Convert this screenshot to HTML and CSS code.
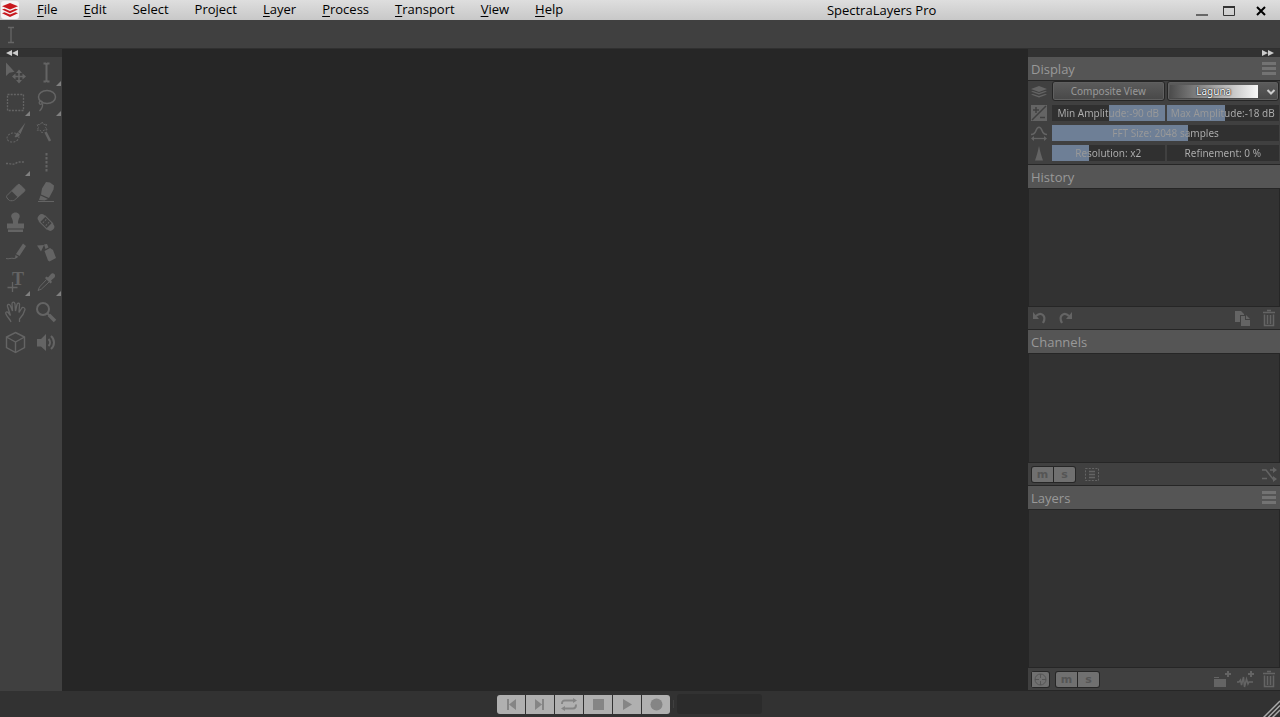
FILE: index.html
```html
<!DOCTYPE html>
<html lang="en">
<head>
    <meta charset="UTF-8">
    <meta name="viewport" content="width=device-width, initial-scale=1.0">
    <title>SpectraLayers Pro</title>
    <link rel="stylesheet" href="styles.css">
</head>
<body>
    <header class="titlebar">
        <svg class="app-logo" viewBox="0 0 20 20">
            <rect x="1" y="1" width="18" height="18" rx="3" fill="#f4f4f4"/>
            <path d="M10 3 18 6.200 10 9.500 2 6.200Z" fill="#c8191e"/>
            <path d="M2 9.500 4.500 8.700 10 11 15.500 8.700 18 9.500 10 13.200ZM2 13.200 4.500 12.200 10 14.500 15.500 12.200 18 13.200 10 17Z" fill="#c8191e"/>
        </svg>
        <nav class="menu">
            <button><u>F</u>ile</button>
            <button><u>E</u>dit</button>
            <button>Select</button>
            <button>Project</button>
            <button><u>L</u>ayer</button>
            <button><u>P</u>rocess</button>
            <button><u>T</u>ransport</button>
            <button><u>V</u>iew</button>
            <button><u>H</u>elp</button>
        </nav>
        <h1 class="app-title">SpectraLayers Pro</h1>
        <div class="window-buttons">
            <button aria-label="Minimize"><svg viewBox="0 0 30 20"><path d="M9 15h12" stroke="#444" stroke-width="1.500"/></svg></button>
            <button aria-label="Maximize"><svg viewBox="0 0 30 20"><path d="M6.500 6.500h11v9h-11z" fill="none" stroke="#333"/><path d="M6 7h12" stroke="#333" stroke-width="2"/></svg></button>
            <button aria-label="Close"><svg viewBox="0 0 30 20"><path d="m10 7 8 8m0-8-8 8" stroke="#000" stroke-width="2"/></svg></button>
        </div>
    </header>

    <div class="toolbar">
        <svg class="toolbar-icon" viewBox="0 0 22 28"><path d="M8 7.500h2.500l.5.5.5-.5H14M8 22.500h2.500l.5-.5.5.5H14M11 8v14" fill="none" stroke="#666" stroke-width="1.300"/></svg>
    </div>

    <main class="workspace">
        <aside class="toolbox">
            <div class="strip"><button aria-label="Collapse tools"><svg viewBox="0 0 12 6"><path d="M6 0v6L0 3zM12 0v6L6 3z"/></svg></button></div>
            <div class="tools">
                <button aria-label="Move"><svg viewBox="0 0 30 30">
                    <path class="fill" d="M6 5.500V19l3.500-3.300 5-1zM19 12.500l3 3.500h-6zM19 26.500l3-3.500h-6zM12 19.500l3.500-3v6zM26 19.500l-3.500-3v6z"/>
                    <path d="M19 15v9M14 19.500h10" stroke-width="1.500"/></svg></button>
                <button aria-label="Time selection" class="more"><svg viewBox="0 0 30 30">
                    <path d="M12.500 6.500h2l1 1 1-1h2M12.500 24.500h2l1-1 1 1h2M15.500 7v17" stroke-width="2"/></svg></button>
                <button aria-label="Rectangular selection" class="more"><svg viewBox="0 0 30 30">
                    <path d="M7.500 7.500h16v16h-16z" stroke-dasharray="2 1.200" stroke-width="1.300"/></svg></button>
                <button aria-label="Lasso selection" class="more"><svg viewBox="0 0 30 30">
                    <ellipse cx="16" cy="10" rx="8.500" ry="6.500" stroke-width="1.500"/>
                    <path d="M9 14c-2 2 0 4 1.500 3s1-3-1-3M11.500 17c.5 3-1 5-3 7" stroke-width="1.300"/></svg></button>
                <button aria-label="Brush selection"><svg viewBox="0 0 30 30">
                    <ellipse cx="13" cy="20.500" rx="6" ry="4.500" stroke-dasharray="2 1.300" transform="rotate(-12 13 20.500)"/>
                    <path class="fill" d="M25.500 5.500 20.500 17l-2.500-2zM17.500 15.500l2.500 2c-1.500 2.500-3 3-5.500 2.500 1-1 1-3.500 3-4.500z"/></svg></button>
                <button aria-label="Magic wand"><svg viewBox="0 0 30 30">
                    <path d="m11 5 1.700 2.500 3-.3-1.200 3 1.700 2.600-3.200.2L11 16l-2-3-3 .2L7.500 10.500 6 7.500l3.200.2z" stroke-dasharray="2 1"/>
                    <path d="m14.500 15 4.500 9" stroke-width="2.500"/></svg></button>
                <button aria-label="Frequency selection" class="more"><svg viewBox="0 0 30 30">
                    <path d="M6 16.500h3c4 1.500 6 .5 9-1.500h7" stroke-width="1.500" stroke-dasharray="2 1.300"/></svg></button>
                <button aria-label="Transient selection"><svg viewBox="0 0 30 30">
                    <path d="M15.500 6v19" stroke-width="2" stroke-dasharray="2.500 1.500"/></svg></button>
                <button aria-label="Eraser"><svg viewBox="0 0 30 30">
                    <path d="M7 18.500 18 7.500q1-.5 2 .2l4.500 4.500q.8 1 0 2L14.500 23q-1 .7-2 .7h-2q-1 0-1.700-.7L7 21q-1-1.500 0-2.500z"/>
                    <path class="fill" d="M11.500 14 18 7.500q1-.5 2 .2l4.500 4.500q.8 1 0 2L18 20.500z"/></svg></button>
                <button aria-label="Amplify"><svg viewBox="0 0 30 30">
                    <path class="fill" d="m15 5 4 .5 4 3-.5 4L18 21l-8-3.500 1-6zM9.500 18.500 17 22l-3.500 1.500-5.500-.5z"/>
                    <path d="M7 24.500h16"/></svg></button>
                <button aria-label="Clone stamp"><svg viewBox="0 0 30 30">
                    <path class="fill" d="M15.500 5.500c3 0 5 2.500 4 5-1 2-1.500 3-1.500 6h6v5H7v-5h6c0-3-.5-4-1.500-6-1-2.500 1-5 4-5zM8 22.500h15V25H8z"/></svg></button>
                <button aria-label="Heal"><svg viewBox="0 0 30 30"><g transform="rotate(45 15 15.500)">
                    <path class="fill" d="M9 11.500a4 4 0 0 0 0 8h1.500v-8zM21 11.500a4 4 0 0 1 0 8h-1.500v-8z"/><path d="M9 11.500h12M9 19.500h12"/>
                    <path d="M12.500 14h1m3 0h1m-5 3h1m3 0h1" stroke-width="1.800"/></g></svg></button>
                <button aria-label="Frequency repair"><svg viewBox="0 0 30 30">
                    <path d="M6 21.500c3 1 5-1 8 0l3-1"/><path class="fill" d="m23 6.500 3 2.500-6.500 10-3.500-2zM15.500 18l3 2-3.500 1.500z"/></svg></button>
                <button aria-label="Noise spray"><svg viewBox="0 0 30 30">
                    <path class="fill" d="M6 8.500 13 8l-3 6.500zM13 7.500l3-.500 1.500 3.500-3 1.500zM13.500 14l5.500-3 3 2 3 8-6.500 3.500-1.500-1z"/></svg></button>
                <button aria-label="Text" class="more"><svg viewBox="0 0 30 30">
                    <text class="fill icon-letter" x="12" y="18">T</text><path d="M12.500 15v10M7.500 20.500h10" stroke-width="1.300"/></svg></button>
                <button aria-label="Color picker" class="more"><svg viewBox="0 0 30 30">
                    <path d="m15.500 12.500-7 7.500-1.500 3.500 3.500-1.500 7.500-7"/><path class="fill" d="m14 11 1.500-1.500 1.500 1 3-3.500c2-2 5.500 1 3.500 3.500L20 13.500l1 1.500-1.500 1.500z"/></svg></button>
                <button aria-label="Hand"><svg viewBox="0 0 30 30">
                    <path d="M11 25c-1-3-4-5-5-8-1-2 1-3 2.500-1l2 2.500-3-9c-.5-2.500 2-3 3-.5l2 5-.5-7c0-2.500 2.500-2.500 3 0l.5 7 1.500-6.500c.5-2 3-1.500 2.500.5L19 15.500l2.500-4c1-2 3.500-1 3.500 1-1 4-2 6-5.500 9.500V25" stroke-width="1.300"/></svg></button>
                <button aria-label="Zoom"><svg viewBox="0 0 30 30">
                    <circle cx="12" cy="12" r="6" stroke-width="2"/><path d="m16.500 16.500 2 2" stroke-width="2"/><path d="m18 18 6 6" stroke-width="3.500"/></svg></button>
                <button aria-label="3D view"><svg viewBox="0 0 30 30">
                    <path d="m15.500 5.500 9 4.500v10.500l-9 5-9-5V10zM6.500 10l9 5 9-5M15.500 15v10.500" stroke-width="1.400"/></svg></button>
                <button aria-label="Playback"><svg viewBox="0 0 30 30">
                    <path class="fill" d="M6 12h4l5-5v17l-5-4.500H6z"/><path d="M17.500 12c2 2 2 5 0 7M20 9c4 3.500 4 9.500 0 13" stroke-width="2"/></svg></button>
            </div>
        </aside>

        <section class="canvas"></section>

        <aside class="panels">
            <div class="strip strip-right"><button aria-label="Collapse panels"><svg viewBox="0 0 12 6"><path d="M0 0v6l6-3zM6 0v6l6-3z"/></svg></button></div>

            <section class="panel">
                <div class="panel-header">
                    <h2>Display</h2>
                    <button class="panel-menu" aria-label="Display menu"></button>
                </div>
                <div class="display-settings">
                    <div class="setting view-row">
                        <svg class="setting-icon" viewBox="0 0 22 20"><path class="fill" d="m11 5 8 3-8 3L3 8zM3 10.500l2-.5 6 2 6-2 2 .5-8 3zM3 13.500l2-.5 6 2 6-2 2 .5-8 3z"/></svg>
                        <button class="view-button">Composite View</button>
                        <div class="color-map">
                            <select aria-label="Color map"><option>Laguna</option></select>
                            <svg viewBox="0 0 10 6"><path d="m1.500 1 3.500 3.500L8.500 1" fill="none" stroke="#ccc" stroke-width="2"/></svg>
                        </div>
                    </div>
                    <div class="setting">
                        <svg class="setting-icon" viewBox="0 0 22 16"><path class="fill" d="M3 0h16v16H3z"/><path d="M4 15 18 1M5 5h6M8 2v6M12 12.500h5" style="stroke: #404040" stroke-width="1.500"/></svg>
                        <div class="slider" style="--from: 50%; --to: 100%">
                            <input type="range" id="min-amp" min="-180" max="0" value="-90">
                            <label for="min-amp">Min Amplitude:-90 dB</label>
                        </div>
                        <div class="slider" style="--from: 0%; --to: 52%">
                            <input type="range" id="max-amp" min="-36" max="0" value="-18">
                            <label for="max-amp">Max Amplitude:-18 dB</label>
                        </div>
                    </div>
                    <div class="setting">
                        <svg class="setting-icon" viewBox="0 0 22 16"><path d="M3 9.500c3 0 4-1 5-4 1.500-4.500 4.500-4.500 6 0 1 3 2 4 5 4" stroke-width="1.500"/><path d="M5 13.500h12" stroke-width="1.300"/><path class="fill" d="m3 13.500 3-2.500v5zM19 13.500 16 11v5z"/></svg>
                        <div class="slider" style="--from: 0%; --to: 60%">
                            <input type="range" id="fft-size" min="6" max="14" value="11">
                            <label for="fft-size">FFT Size: 2048 samples</label>
                        </div>
                    </div>
                    <div class="setting">
                        <svg class="setting-icon" viewBox="0 0 22 16"><path class="fill" d="M11 1c1 5 2 9 4 14.500H7C9 10 10 6 11 1z"/></svg>
                        <div class="slider" style="--from: 0%; --to: 33%">
                            <input type="range" id="resolution" min="1" max="4" value="2">
                            <label for="resolution">Resolution: x2</label>
                        </div>
                        <div class="slider" style="--from: 0%; --to: 0%">
                            <input type="range" id="refinement" min="0" max="100" value="0">
                            <label for="refinement">Refinement: 0 %</label>
                        </div>
                    </div>
                </div>
            </section>

            <section class="panel panel-history">
                <div class="panel-header"><h2>History</h2></div>
                <div class="panel-list"></div>
                <div class="panel-footer">
                    <button class="icon-button" aria-label="Undo"><svg viewBox="0 0 22 22"><path class="fill" d="M5 5v7h6z"/><path d="M8 9c5-5 11 0 7 7" stroke-width="2.200"/></svg></button>
                    <button class="icon-button" aria-label="Redo"><svg viewBox="0 0 22 22"><path class="fill" d="M17 5v7h-6z"/><path d="M14 9C9 4 3 9 7 16" stroke-width="2.200"/></svg></button>
                    <span class="spacer"></span>
                    <button class="icon-button" aria-label="Copy"><svg viewBox="0 0 22 22"><path class="fill" d="M4 4h6l3 3v1H9v7H4zM10 9h4v4h5v6h-9zM15 8l4 4h-4z"/></svg></button>
                    <button class="icon-button" aria-label="Delete"><svg viewBox="0 0 22 22"><path d="M6.500 7.500V18.500h9v-11M5 5.500h12M9 3.500h4M9.500 8v9m3-9v9" stroke-width="1.500"/></svg></button>
                </div>
            </section>

            <section class="panel panel-channels">
                <div class="panel-header"><h2>Channels</h2></div>
                <div class="panel-list"></div>
                <div class="panel-footer">
                    <div class="toggles"><button aria-label="Mute channel">m</button><button aria-label="Solo channel">s</button></div>
                    <button class="icon-button" aria-label="Select channel"><svg viewBox="0 0 22 22"><path d="M4.500 5.500h13v12h-13z" stroke-dasharray="2 1.300"/><path d="M8 8.500h6M8 11.500h6M8 14.500h6" stroke-width="1.400"/></svg></button>
                    <span class="spacer"></span>
                    <button class="icon-button" aria-label="Reorder channels"><svg viewBox="0 0 22 22"><path d="M4 7h4l7 9h3M4 15.500h5M12 7h5" stroke-width="1.500"/><path class="fill" d="m15 4 4 3-4 3zM15 13l4 3-4 3z"/></svg></button>
                </div>
            </section>

            <section class="panel panel-layers">
                <div class="panel-header">
                    <h2>Layers</h2>
                    <button class="panel-menu" aria-label="Layers menu"></button>
                </div>
                <div class="panel-list"></div>
                <div class="panel-footer panel-footer-tight">
                    <div class="toggles"><button class="target" aria-label="Target layer"><svg viewBox="0 0 17 15"><circle cx="8.500" cy="7.500" r="5.500"/><path d="M8.500 2v4m0 3v4M3 7.500h4m3 0h4"/></svg></button></div>
                    <div class="toggles"><button aria-label="Mute layer">m</button><button aria-label="Solo layer">s</button></div>
                    <span class="spacer"></span>
                    <button class="icon-button" aria-label="New group"><svg viewBox="0 0 22 22"><path class="fill" d="M4 9h5v1H4zM4 11h12v8H4zM15 5h2V3h2v2h2v2h-2v2h-2V7h-2z"/></svg></button>
                    <button class="icon-button" aria-label="New layer"><svg viewBox="0 0 22 22"><path d="M3 14h2l1.500-2 1 5 2-8 1 10 2-8 1.500 5 1-2H19" stroke-width="1.500"/><path class="fill" d="M14 5h2V3h2v2h2v2h-2v2h-2V7h-2z"/></svg></button>
                    <button class="icon-button" aria-label="Delete layer"><svg viewBox="0 0 22 22"><path d="M6.500 7.500V18.500h9v-11M5 5.500h12M9 3.500h4M9.500 8v9m3-9v9" stroke-width="1.500"/></svg></button>
                </div>
            </section>
        </aside>
    </main>

    <footer class="statusbar">
        <div class="transport">
            <div class="transport-buttons">
                <button aria-label="Go to start"><svg viewBox="0 0 28 19"><path d="M10 4h2v11h-2zM19 4v11l-7-5.500z"/></svg></button>
                <button aria-label="Go to end"><svg viewBox="0 0 28 19"><path d="M9 4v11l7-5.500zM16 4h2v11h-2z"/></svg></button>
                <button aria-label="Loop"><svg viewBox="0 0 28 19"><path d="M18 3v5l4-2.500zM10 11v5l-4-2.500z"/><path d="M7 9c0-3 1-3.500 3-3.500h8M21 9.500c0 3-1 4-3 4h-8" fill="none" stroke="#858585" stroke-width="2"/></svg></button>
                <button aria-label="Stop"><svg viewBox="0 0 28 19"><path d="M9 4h11v11H9z"/></svg></button>
                <button aria-label="Play"><svg viewBox="0 0 28 19"><path d="M10 4v11l9-5.500z"/></svg></button>
                <button aria-label="Record"><svg viewBox="0 0 28 19"><circle cx="14.500" cy="9.500" r="6"/></svg></button>
            </div>
            <span class="transport-divider"></span>
            <output class="time-display"></output>
        </div>
        <svg class="resize-grip" viewBox="0 0 22 26"><path d="M5.500 26.500 22 10M10 26.500 22 14.500M14.500 26.500 22 19" stroke="#aaa" stroke-width="1.500"/></svg>
    </footer>
</body>
</html>
```
FILE: styles.css
```css
* {
    box-sizing: border-box;
}

body {
    display: flex;
    flex-direction: column;
    height: 100vh;
    margin: 0;
    overflow: hidden;
    background-color: #262626;
    color: #999;
    font-family: "Open Sans", "Noto Sans", sans-serif;
    font-size: 13px;
}

button {
    margin: 0;
    padding: 0;
    border: none;
    background: none;
    color: inherit;
    font: inherit;
}

svg {
    display: block;
}

h1, h2 {
    margin: 0;
    font-size: 13px;
    font-weight: normal;
}

/* Title bar */
.titlebar {
    display: flex;
    height: 20px;
    flex-shrink: 0;
    background: linear-gradient(#dedede, #c8c8c8);
    color: #000;
}

.app-logo {
    width: 20px;
    height: 20px;
}

.menu {
    display: flex;
    padding-left: 4px;
}

.menu button {
    height: 18px;
    padding: 0 13px;
    line-height: 18px;
}

.menu u {
    text-underline-offset: 2px;
}

.app-title {
    flex: 1;
    line-height: 20px;
    text-align: center;
}

.window-buttons {
    display: flex;
    padding-right: 3px;
}

.window-buttons svg {
    width: 30px;
    height: 20px;
}

/* Tool options */
.toolbar {
    height: 29px;
    flex-shrink: 0;
    border-bottom: 1px solid #303030;
    background-color: #404040;
}

.toolbar-icon {
    width: 22px;
    height: 28px;
}

.workspace {
    display: flex;
    flex: 1;
    min-height: 0;
}

.canvas {
    flex: 1;
}

.strip {
    display: flex;
    height: 8px;
    flex-shrink: 0;
    padding: 1px 6px;
    background-color: #323232;
}

.strip-right {
    justify-content: flex-end;
}

.strip svg {
    width: 12px;
    height: 6px;
    fill: #ccc;
}

/* Tools */
.toolbox {
    width: 62px;
    background-color: #404040;
}

.tools {
    display: grid;
    grid-template-columns: 1fr 1fr;
}

.tools button {
    position: relative;
    height: 30px;
}

.tools svg {
    width: 30px;
    height: 30px;
}

.tools .more::after {
    content: "";
    position: absolute;
    right: 1px;
    bottom: 1px;
    border-bottom: 5px solid #808080;
    border-left: 5px solid transparent;
}

.tools svg,
.icon-button svg,
.setting-icon {
    fill: none;
    stroke: #646464;
}

.fill {
    fill: #646464;
    stroke: none;
}

.icon-letter {
    font-family: "Liberation Serif", serif;
    font-size: 18px;
    font-weight: bold;
}

/* Panels */
.panels {
    display: flex;
    flex-direction: column;
    width: 252px;
}

.panel {
    display: flex;
    flex-direction: column;
    background-color: #404040;
}

.panel-history {
    flex: 165;
}

.panel-channels {
    flex: 156;
}

.panel-layers {
    flex: 205;
}

.panel-header {
    display: flex;
    align-items: center;
    justify-content: space-between;
    height: 24px;
    flex-shrink: 0;
    padding: 0 4px 0 3px;
    border-bottom: 1px solid #262626;
    background-color: #555;
}

.panel-menu {
    width: 14px;
    height: 13px;
    background: repeating-linear-gradient(#737373 0 3px, transparent 3px 5px);
}

.panel-list {
    flex: 1;
    border-left: 1px solid #262626;
    border-right: 1px solid #262626;
    background-color: #323232;
}

.panel-footer {
    display: flex;
    align-items: center;
    gap: 5px;
    height: 24px;
    flex-shrink: 0;
    padding-left: 0;
    border-top: 1px solid #262626;
    border-bottom: 1px solid #262626;
}

.panel-footer-tight {
    gap: 2px;
}

.icon-button svg {
    width: 22px;
    height: 22px;
}

.spacer {
    flex: 1;
}

.toggles {
    display: flex;
    gap: 1px;
    margin-left: 3px;
    padding: 1px;
    border-radius: 3px;
    background-color: #262626;
}

.toggles button {
    width: 21px;
    height: 15px;
    background-color: #707070;
    color: #555;
    font-family: "DejaVu Sans", sans-serif;
    font-size: 11px;
    font-weight: bold;
    line-height: 13px;
}

.toggles button:first-child {
    border-radius: 2px 0 0 2px;
}

.toggles button:last-child {
    border-radius: 0 2px 2px 0;
}

.toggles .target {
    width: 17px;
    border-radius: 2px;
}

.target svg {
    width: 17px;
    height: 15px;
    fill: none;
    stroke: #555;
}

/* Display settings */
.display-settings {
    display: flex;
    flex-direction: column;
    gap: 4px;
    padding: 0 1px 3px 0;
    border-bottom: 1px solid #262626;
    font-family: "Noto Sans", sans-serif;
    font-size: 10px;
}

.setting {
    display: flex;
    gap: 2px;
    height: 16px;
}

.view-row {
    height: 20px;
}

.setting-icon {
    width: 22px;
    height: 16px;
    flex-shrink: 0;
}

.view-row .setting-icon {
    height: 20px;
}

.view-button,
.color-map {
    flex: 1;
    border: 1px solid #262626;
    border-radius: 3px;
    background: linear-gradient(#5c5c5c, #484848);
    box-shadow: inset 0 0 0 1px #606060;
}

.color-map {
    position: relative;
}

.color-map select {
    display: block;
    width: 100%;
    height: 100%;
    padding: 3px 20px 2px 2px;
    border: none;
    appearance: none;
    background: linear-gradient(90deg, #4c4c4c, #f8f8f8) content-box no-repeat;
    color: #fff;
    font: inherit;
    line-height: 13px;
    text-align-last: center;
    text-shadow: 0 0 1px #000, 0 0 2px #000;
}

.color-map svg {
    position: absolute;
    top: 7px;
    right: 2px;
    width: 10px;
    height: 6px;
    pointer-events: none;
}

.slider {
    position: relative;
    flex: 1;
}

.slider input {
    display: block;
    width: 100%;
    height: 16px;
    margin: 0;
    appearance: none;
    background: linear-gradient(90deg, #303030 var(--from), #6e7f96 var(--from) var(--to), #303030 var(--to));
}

.slider input::-webkit-slider-thumb {
    appearance: none;
    width: 1px;
    height: 16px;
    background: none;
}

/* value text is dimmer where it sits on the filled part */
.slider label {
    position: absolute;
    inset: 0;
    background: linear-gradient(90deg, #b0b0b0 var(--from), #999 var(--from) var(--to), #b0b0b0 var(--to));
    background-clip: text;
    color: transparent;
    line-height: 16px;
    text-align: center;
    white-space: nowrap;
    pointer-events: none;
}

/* Transport */
.statusbar {
    display: flex;
    height: 26px;
    flex-shrink: 0;
    background-color: #323232;
}

.transport {
    display: flex;
    align-items: center;
    justify-content: center;
    flex: 1;
}

.transport-buttons {
    display: flex;
    gap: 1px;
    overflow: hidden;
    border-radius: 3px;
}

.transport-buttons button {
    width: 28px;
    height: 19px;
    background-color: #b0b0b0;
}

.transport-buttons svg {
    width: 28px;
    height: 19px;
    fill: #858585;
}

.transport-divider {
    width: 1px;
    height: 8px;
    margin: 0 3px;
    background-color: #404040;
}

.time-display {
    width: 85px;
    height: 20px;
    border-radius: 3px;
    background-color: #2b2b2b;
}

.resize-grip {
    width: 22px;
    height: 26px;
}
```
